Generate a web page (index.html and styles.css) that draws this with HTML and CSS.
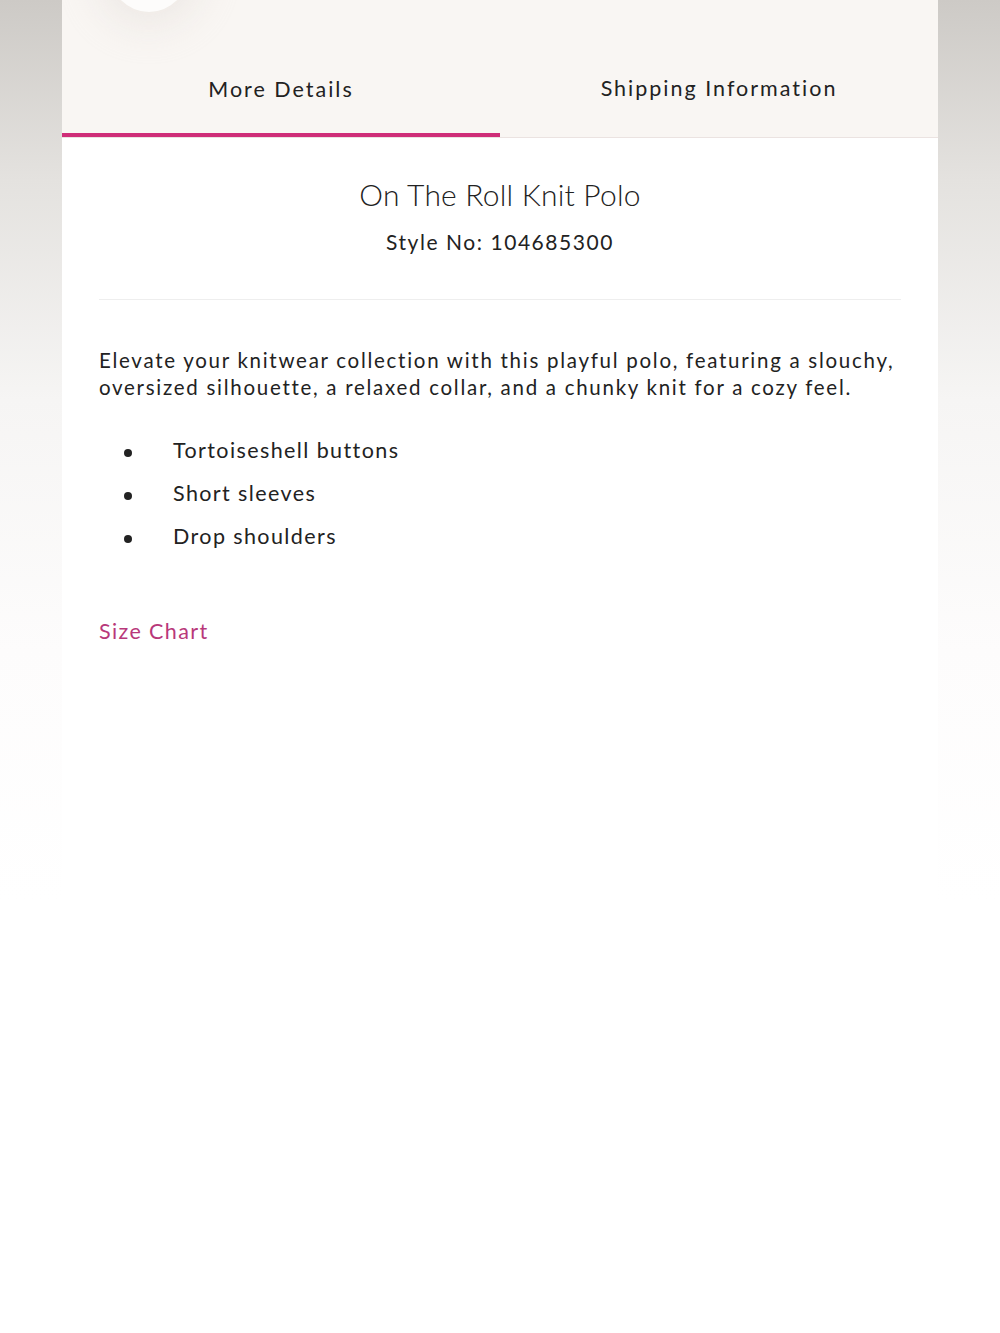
FILE: index.html
```html
<!DOCTYPE html>
<html lang="en">
<head>
<meta charset="utf-8">
<title>On The Roll Knit Polo</title>
<link rel="stylesheet" href="styles.css">
</head>
<body>
<div class="backdrop">
  <div class="panel">
    <div class="tabs">
      <div class="avatar"></div>
      <div class="tab active">More Details</div>
      <div class="tab">Shipping Information</div>
    </div>
    <div class="content">
      <div class="head">
        <h1 class="title">On The Roll Knit Polo</h1>
        <div class="style-no">Style No: 104685300</div>
      </div>
      <p class="desc">Elevate your knitwear collection with this playful polo, featuring a slouchy, oversized silhouette, a relaxed collar, and a chunky knit for a cozy feel.</p>
      <ul class="features">
        <li>Tortoiseshell buttons</li>
        <li>Short sleeves</li>
        <li>Drop shoulders</li>
      </ul>
      <a class="size-chart" href="#">Size Chart</a>
    </div>
  </div>
</div>
</body>
</html>
```

FILE: styles.css
```css
html, body {
  margin: 0;
  padding: 0;
}
body {
  font-family: Lato, "Open Sans", sans-serif;
  color: #222;
  background: linear-gradient(180deg, #cdcac6 0px, #e4e2df 180px, #f6f5f4 400px, #fdfcfc 650px, #ffffff 900px);
  min-height: 1333px;
}
.backdrop {
  display: flex;
  justify-content: center;
  min-height: 1333px;
}
.panel {
  width: 876px;
  background: #fff;
  min-height: 1333px;
}
.tabs {
  position: relative;
  display: flex;
  height: 138px;
  background: #f9f6f3;
  border-bottom: 1px solid #ebe3e1;
  box-sizing: border-box;
  overflow: hidden;
}
.avatar {
  position: absolute;
  left: 48px;
  top: -66px;
  width: 78px;
  height: 78px;
  border-radius: 50%;
  background: #fdfcfb;
  box-shadow: 0 0 40px 14px rgba(225, 218, 212, 0.45);
}
.tab {
  flex: 1;
  display: flex;
  align-items: flex-end;
  justify-content: center;
  padding-bottom: 36px;
  font-size: 21.5px;
  letter-spacing: 2px;
  color: #222;
  box-sizing: border-box;
}
.tab.active {
  border-bottom: 5px solid #cf2d78;
  padding-bottom: 31px;
  margin-bottom: -1px;
}
.content {
  padding: 0 37px;
}
.head {
  text-align: center;
  padding-top: 36px;
  padding-bottom: 42px;
  border-bottom: 1px solid #eeeeee;
}
.title {
  margin: 0;
  font-weight: 300;
  font-size: 30px;
  letter-spacing: 0.2px;
  line-height: 40px;
  color: #222;
}
.style-no {
  margin-top: 13px;
  font-size: 21px;
  letter-spacing: 1.55px;
  line-height: 30px;
}
.desc {
  margin: 47px 0 0;
  font-size: 20.5px;
  line-height: 27px;
  letter-spacing: 1.72px;
}
.features {
  list-style: none;
  margin: 34px 0 0;
  padding: 0;
}
.features li {
  position: relative;
  padding-left: 74px;
  font-size: 21.5px;
  letter-spacing: 1.4px;
  line-height: 30px;
  margin-bottom: 13px;
}
.features li::before {
  content: "";
  position: absolute;
  left: 25px;
  top: 14px;
  width: 8px;
  height: 8px;
  border-radius: 50%;
  background: #222;
}
.size-chart {
  display: inline-block;
  margin-top: 52px;
  font-size: 21.5px;
  letter-spacing: 1.4px;
  line-height: 30px;
  color: #b8387a;
  text-decoration: none;
}
```
